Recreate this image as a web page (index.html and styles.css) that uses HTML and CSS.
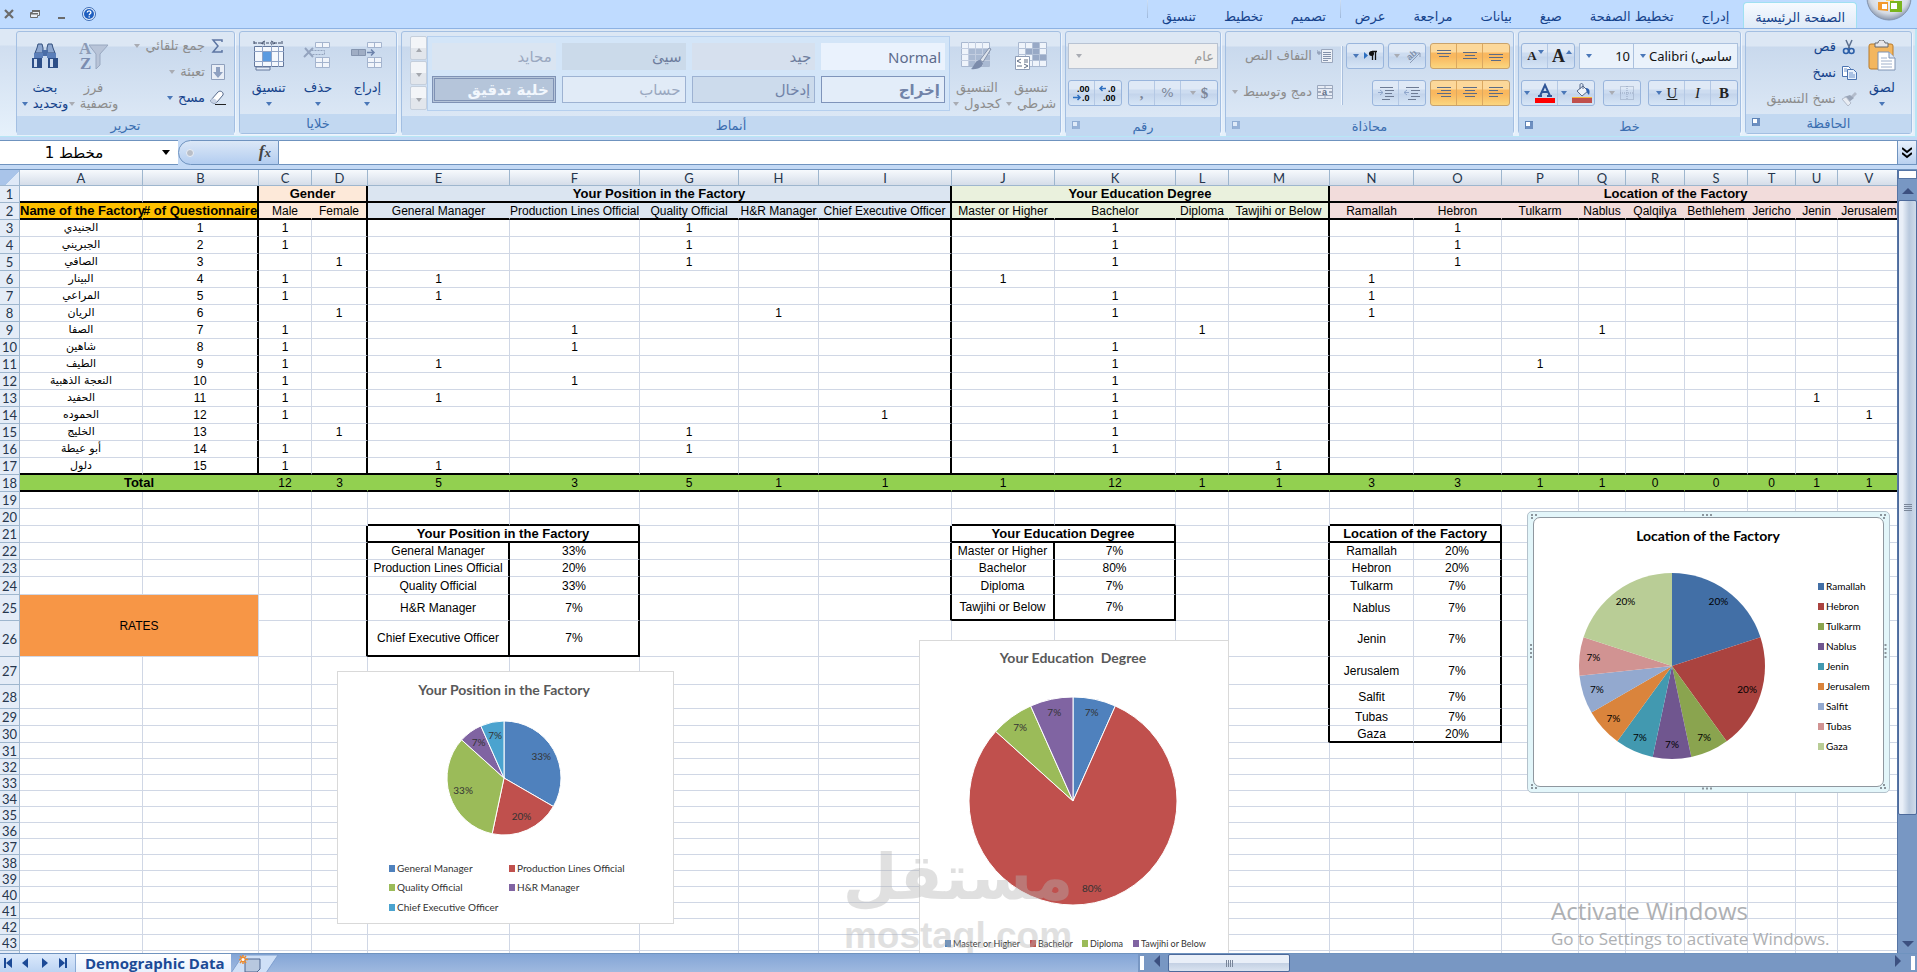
FILE: index.html
```html
<!DOCTYPE html>
<html lang="ar">
<head>
<meta charset="utf-8">
<title>Demographic Data</title>
<link rel="stylesheet" href="styles.css">
</head>
<body>
<header class="top" dir="rtl">
  <nav class="tabs">
    <button class="office" aria-label="Office">
      <svg width="46" height="46" viewBox="0 0 46 46">
        <defs><radialGradient id="orb" cx=".5" cy=".4" r=".6"><stop offset="0" stop-color="#fff"/><stop offset=".75" stop-color="#d5dbe4"/><stop offset="1" stop-color="#8b98ad"/></radialGradient></defs>
        <circle cx="23" cy="23" r="22" fill="url(#orb)" stroke="#8494ae"/>
        <rect x="13" y="16" width="9" height="9" rx="1" fill="#e8591c"/><rect x="24" y="14" width="10" height="10" rx="1" fill="#f5b52b"/>
        <path d="M12 27h10v9l-10-1z" fill="#f39a2b"/><path d="M24 26h12v11H24z" fill="#7ab51d"/>
        <path d="M16 29h5v5h-5zM25 28h6v6h-6z" fill="#fff"/>
        <path d="M20 22h8v4h-8z" fill="#fbd36a"/>
      </svg>
    </button>
    <a class="tab active" href="#home">الصفحة الرئيسية</a>
    <a class="tab" href="#insert">إدراج</a>
    <a class="tab" href="#layout">تخطيط الصفحة</a>
    <a class="tab" href="#formulas">صيغ</a>
    <a class="tab" href="#data">بيانات</a>
    <a class="tab" href="#review">مراجعة</a>
    <a class="tab" href="#view">عرض</a>
    <span class="tabsep"></span>
    <a class="tab" href="#design">تصميم</a>
    <a class="tab" href="#chart-layout">تخطيط</a>
    <a class="tab" href="#format">تنسيق</a>
    <span class="tabsep"></span>
    <span class="grow"></span>
    <div class="winctl">
      <button aria-label="Help"><svg width="14" height="14" viewBox="0 0 14 14"><circle cx="7" cy="7" r="6.5" fill="#e8f1fd" stroke="#3d6cb4"/><circle cx="7" cy="7" r="5" fill="#1f5fc0"/><path d="M5.2 5.6c0-2.4 3.7-2.3 3.7-.2C8.900 6.700 7.200 6.700 7.200 8.200M7.200 9.200v1.400" fill="none" stroke="#fff" stroke-width="1.300"/></svg></button>
      <button aria-label="Minimize"><svg width="10" height="10" viewBox="0 0 10 10"><path d="M2 8h7v2H2z" fill="#6b6b6b"/></svg></button>
      <button aria-label="Restore"><svg width="10" height="10" viewBox="0 0 10 10"><path d="M2.500 1.500h7v5h-2v2h-7v-5h2z" fill="#e9eef5" stroke="#6b6b6b"/><path d="M2 1h8v2H2zM0 4h8v1.500H0z" fill="#6b6b6b"/></svg></button>
      <button aria-label="Close"><svg width="10" height="10" viewBox="0 0 10 10"><path d="M1 1l8 8M9 1L1 9" stroke="#6b6b6b" stroke-width="2.200"/></svg></button>
    </div>
  </nav>

  <div class="ribbon">
    <section class="group g-clip">
      <div class="body">
        <button class="big paste"><svg width="28" height="32" viewBox="0 0 28 32"><rect x="1" y="4" width="24" height="25" rx="2" fill="#f3b65f" stroke="#b87a2a"/><path d="M7 3h3c0-4 7-4 7 0h3v4H7z" fill="#e6e6ea" stroke="#66686f"/><path d="M10 12h11l6 6v12H10z" fill="#fff" stroke="#7f93b4"/><path d="M21 12v6h6" fill="#dfe8f5" stroke="#7f93b4"/><path d="M13 18h6M13 21h11M13 24h11M13 27h11" stroke="#9fb0cb"/></svg><span>لصق</span><i class="dn"></i></button>
        <div class="stack">
          <button class="row"><svg width="16" height="16" viewBox="0 0 16 16"><path d="M5 1l4 9M11 1L7 10" stroke="#5b6f8f" stroke-width="1.500"/><circle cx="5" cy="12" r="2.500" fill="none" stroke="#2c5fa8" stroke-width="1.600"/><circle cx="10.500" cy="12" r="2.500" fill="none" stroke="#2c5fa8" stroke-width="1.600"/></svg>قص</button>
          <button class="row"><svg width="16" height="16" viewBox="0 0 16 16"><path d="M1.500 1.500h6l2 2v8h-8z" fill="#fff" stroke="#4b73b0"/><path d="M6.500 4.500h6l3 3v7h-9z" fill="#e8f0fb" stroke="#4b73b0"/><path d="M8 8h4M8 10h6M8 12h6M3 4h3M3 6h3" stroke="#6d93cc"/></svg>نسخ</button>
          <button class="row off"><svg width="16" height="16" viewBox="0 0 16 16"><path d="M10 5l4-4 2 2-4 4z" fill="#b3bccb"/><path d="M3 6l5 5 5-4-4-3z" fill="#9aa5b8"/><path d="M1 8l6 7 3-3-5-6z" fill="#e8ecf3" stroke="#b3bccb"/></svg>نسخ التنسيق</button>
        </div>
      </div>
      <h2>الحافظة<i class="launch"></i></h2>
    </section>

    <section class="group g-font">
      <div class="body rows">
        <div class="line">
          <div class="combos" dir="ltr">
            <label class="combo small"><i class="dn"></i><select aria-label="Font size"><option>10</option></select></label>
            <label class="combo wide"><i class="dn"></i><select aria-label="Font"><option>Calibri (ساسي</option></select></label>
          </div>
          <div class="btns"><button aria-label="Grow font"><b class="serif f18">A</b><i class="up sup"></i></button><button aria-label="Shrink font"><b class="serif f13">A</b><i class="dn sup"></i></button></div>
        </div>
        <div class="line">
          <div class="btns"><button><b class="serif f15">B</b></button><button><em class="serif f15">I</em></button><button class="wide"><u class="serif f15">U</u><i class="dn"></i></button></div>
          <div class="btns"><button class="wide" aria-label="Borders"><svg width="14" height="14" viewBox="0 0 14 14"><path d="M.5.500h13v13H.5zM7 0v14M0 7h14" fill="none" stroke="#93a3bd" stroke-dasharray="1 1"/></svg><i class="dn pale"></i></button></div>
          <div class="btns"><button class="wide" aria-label="Fill colour"><svg width="20" height="20" viewBox="0 0 20 20"><path d="M0 15h20v5H0z" fill="#c0504d"/><path d="M0 14h20v1H0z" fill="#f6b73c"/><path d="M5 8l6-5 5 5-6 5z" fill="#eef3fa" stroke="#56698a"/><path d="M8 6V2c0-2 3-2 3 0v4" fill="none" stroke="#56698a"/><path d="M14 5c4 0 4 4 3 7-2-2-3-4-3-7z" fill="#2d5fae"/></svg><i class="dn"></i></button><button class="wide" aria-label="Font colour"><svg width="20" height="20" viewBox="0 0 20 20"><path d="M0 15h20v5H0z" fill="#f00"/><path d="M5 13l5-11 5 11M7 9h6M3 13h4M12 13h5" fill="none" stroke="#2f5597" stroke-width="2"/></svg><i class="dn"></i></button></div>
        </div>
      </div>
      <h2>خط<i class="launch"></i></h2>
    </section>

    <section class="group g-align">
      <div class="body">
        <div class="rows">
          <div class="line">
            <div class="btns hot"><button aria-label="Bottom"><svg width="14" height="14" viewBox="0 0 14 14"><path d="M0 5.500h14M0 8.500h14M2 11.500h10" stroke="#5b6b85"/></svg></button><button aria-label="Middle"><svg width="14" height="14" viewBox="0 0 14 14"><path d="M0 3.500h14M2 6.500h10M0 9.500h14" stroke="#5b6b85"/></svg></button><button aria-label="Top"><svg width="14" height="14" viewBox="0 0 14 14"><path d="M0 1.500h14M0 4.500h14M2 7.500h10" stroke="#5b6b85"/></svg></button></div>
            <div class="btns"><button class="wide" aria-label="Orientation"><svg width="16" height="16" viewBox="0 0 16 16"><path d="M5 15L15 5M11 5h4v4" fill="none" stroke="#8c9bb5"/><text x="2" y="10" font-size="9" class="svgb" fill="#8090aa" transform="rotate(-40 7 8)">ab</text></svg><i class="dn pale"></i></button></div>
            <div class="btns"><button class="wide" aria-label="Direction"><svg width="14" height="12" viewBox="0 0 14 12"><path d="M0 2l4 3.500L0 9z" fill="#2d6fc0"/><path d="M8.500 1v9M11.500 1v9M13 1.500H8" stroke="#111" stroke-width="1.300"/><circle cx="7.500" cy="3.500" r="2.500" fill="#111"/></svg><i class="dn"></i></button></div>
          </div>
          <div class="line">
            <div class="btns hot"><button aria-label="Left"><svg width="14" height="14" viewBox="0 0 14 14"><path d="M0 1.500h14M0 4.500h9M0 7.500h14M0 10.500h9" stroke="#5b6b85"/></svg></button><button aria-label="Center"><svg width="14" height="14" viewBox="0 0 14 14"><path d="M0 1.500h14M2 4.500h10M0 7.500h14M2 10.500h10" stroke="#5b6b85"/></svg></button><button aria-label="Right"><svg width="14" height="14" viewBox="0 0 14 14"><path d="M0 1.500h14M4 4.500h10M0 7.500h14M4 10.500h10" stroke="#5b6b85"/></svg></button></div>
            <div class="btns start"><button aria-label="Indent"><svg width="16" height="14" viewBox="0 0 16 14"><path d="M2 1.500h13M7 4.500h9M7 7.500h7M7 10.500h9M4 13.500h8" stroke="#6d7b94"/><path d="M0 6.500h5M3 4l-3 2.500L3 9" fill="none" stroke="#8fa6cb"/></svg></button><button aria-label="Outdent"><svg width="16" height="14" viewBox="0 0 16 14"><path d="M2 1.500h13M7 4.500h9M7 7.500h7M7 10.500h9M4 13.500h8" stroke="#6d7b94"/><path d="M0 6.500h5M2 4l3 2.500L2 9" fill="none" stroke="#8fa6cb"/></svg></button></div>
          </div>
        </div>
        <span class="vsep"></span>
        <div class="stack two">
          <button class="row off"><svg width="16" height="14" viewBox="0 0 16 14"><path d="M4.500.500h11v13h-11z" fill="#eef2f8" stroke="#9aa7bd"/><path d="M6 3.500h8M6 5.500h8M6 7.500h8M6 9.500h8M6 11.500h5M0 1v3h4M2 2v4" stroke="#8492ab" fill="none"/></svg>التفاف النص</button>
          <button class="row off"><svg width="16" height="14" viewBox="0 0 16 14"><path d="M.5.500h15v13H.5zM0 3.500h16M0 10.500h16M8 0v3M8 11v3" fill="#e7ecf5" stroke="#9aa7bd"/><text x="5" y="10" font-size="9" class="svgb" fill="#5f6d86">a</text><path d="M1 7h3M12 7h3" stroke="#5f6d86"/></svg>دمج وتوسيط<i class="dn pale"></i></button>
        </div>
      </div>
      <h2>محاذاة<i class="launch pale"></i></h2>
    </section>

    <section class="group g-num">
      <div class="body rows">
        <div class="line"><label class="combo gray"><select aria-label="Number format"><option>عام</option></select><i class="dn pale"></i></label></div>
        <div class="line">
          <div class="btns off3"><button class="wide"><b class="serif f15">$</b><i class="dn pale"></i></button><button><span class="f13">%</span></button><button><b class="serif f15">,</b></button></div>
          <div class="btns tiny"><button aria-label="Increase decimal"><svg width="18" height="18" viewBox="0 0 18 18"><text x="9" y="8" font-size="9" class="svgb">.0</text><text x="4" y="17" font-size="9" class="svgb">.00</text><path d="M1 4.500h6M3.500 2L1 4.500 3.500 7" fill="none" stroke="#2d6fc0" stroke-width="1.500"/></svg></button><button aria-label="Decrease decimal"><svg width="18" height="18" viewBox="0 0 18 18"><text x="4" y="8" font-size="9" class="svgb">.00</text><text x="9" y="17" font-size="9" class="svgb">.0</text><path d="M0 13.500h7M4.500 11L7 13.500 4.500 16" fill="none" stroke="#2d6fc0" stroke-width="1.500"/></svg></button></div>
        </div>
      </div>
      <h2>رقم<i class="launch pale"></i></h2>
    </section>

    <section class="group g-style">
      <div class="body">
        <button class="big off"><svg width="32" height="30" viewBox="0 0 32 30"><path d="M3.500 1.500h28v24h-28z" fill="#eff4fb" stroke="#a9b8d0"/><path d="M18 2h7v6h-7zM11 8h14v6H11zM18 14h13v6H18z" fill="#98a9c6"/><path d="M3 7.500h29M3 13.500h29M3 19.500h29M10.500 1v24M17.500 1v24M24.500 1v24" stroke="#b4c2d8"/><path d="M.5 15.500h14v13H.5z" fill="#fff" stroke="#8d9cb6"/><path d="M6 18l-4 2 4 2M2 25h5M9 19h4M9 21h4M9 23l4 2-4 2" fill="none" stroke="#5e6c84"/></svg><span>تنسيق</span><span>شرطي<i class="dn pale"></i></span></button>
        <button class="big off"><svg width="32" height="30" viewBox="0 0 32 30"><path d="M.5 1.500h28v24H.5z" fill="#eff4fb" stroke="#a9b8d0"/><path d="M8 8h20v17H8z" fill="#a9b9d2"/><path d="M0 7.500h29M0 13.500h29M0 19.500h29M7.500 1v24M14.500 1v24M21.500 1v24" stroke="#c2cde0"/><path d="M30 8l-8 13-3-2L28 7z" fill="#dde3ec" stroke="#8492ab"/><path d="M10 28c3-2 4-9 9-9l3 3c0 4-6 7-12 6z" fill="#7c8cab"/></svg><span>التنسيق</span><span>كجدول<i class="dn pale"></i></span></button>
        <div class="gallery">
          <div class="cells">
            <button class="s-normal">Normal</button><button class="s-good">جيد</button><button class="s-bad">سيئ</button><button class="s-neutral">محايد</button>
            <button class="s-out">إخراج</button><button class="s-in">إدخال</button><button class="s-calc">حساب</button><button class="s-check">خلية تدقيق</button>
          </div>
          <div class="spin"><button aria-label="Up"><i class="up"></i></button><button aria-label="Down"><i class="dn"></i></button><button class="more" aria-label="More"><i class="dn"></i></button></div>
        </div>
      </div>
      <h2>أنماط</h2>
    </section>

    <section class="group g-cells">
      <div class="body">
        <button class="big"><svg width="32" height="30" viewBox="0 0 32 30"><path d="M16.500 1.500h14v5h-14zM16.500 16.500h14v10h-14zM16 21.500h15M23.500 1v6M23.500 16v11" fill="#f1f5fb" stroke="#a4b4ce"/><path d="M.5 8.500h14v6H.5zM7.500 8v7" fill="#9fadc4" stroke="#8494ae"/><path d="M16 11.500h7M20 8.500l3 3-3 3" fill="none" stroke="#6c82ab" stroke-width="1.500"/></svg><span>إدراج</span><i class="dn"></i></button>
        <button class="big"><svg width="32" height="30" viewBox="0 0 32 30"><path d="M13.500 1.500h14v5h-14zM13.500 16.500h14v10h-14zM13 21.500h15M20.500 1v6M20.500 16v11" fill="#f1f5fb" stroke="#a4b4ce"/><path d="M9.500 9.500h13v4h-13" fill="none" stroke="#93a3bd" stroke-dasharray="2 1"/><path d="M3 7l8 9M11 7l-9 9" stroke="#94a4bf" stroke-width="2"/></svg><span>حذف</span><i class="dn"></i></button>
        <button class="big"><svg width="32" height="30" viewBox="0 0 32 30"><path d="M1.500 5.500h29v20h-29z" fill="#f4f8fd" stroke="#64789c"/><path d="M1 10.500h30M1 20.500h30M9.500 5v21M18.500 5v21M25.500 5v21" stroke="#8fa3c6"/><path d="M10 11h8v9h-8z" fill="#5b9be0"/><path d="M3 26h14v3H3z" fill="#e3ebf7" stroke="#64789c"/><path d="M1 2h28M12 0l-4 2 4 2M18 0l4 2-4 2M1 0v4M29 0v4" fill="none" stroke="#3c4a66" stroke-dasharray="3 1"/></svg><span>تنسيق</span><i class="dn"></i></button>
      </div>
      <h2>خلايا</h2>
    </section>

    <section class="group g-edit">
      <div class="body">
        <div class="stack">
          <button class="row off"><svg width="16" height="16" viewBox="0 0 16 16"><path d="M12 4V2H3l5 6-5 6h9v-2" fill="none" stroke="#5d76a3" stroke-width="1.500"/></svg>جمع تلقائي<i class="dn pale"></i></button>
          <button class="row off"><svg width="16" height="16" viewBox="0 0 16 16"><path d="M1.500.500h13v15h-13z" fill="#e9eef6" stroke="#8fa0bd"/><path d="M6 3h4v5h3l-5 6-5-6h3z" fill="#8ea0c0"/></svg>تعبئة<i class="dn pale"></i></button>
          <button class="row"><svg width="16" height="16" viewBox="0 0 16 16"><path d="M1 10l7-8c2-2 6 0 5 3l-6 7c-2 2-7 1-6-2z" fill="#fff" stroke="#56698a"/><path d="M1 10c1-3 6-1 6 2-2 2-7 1-6-2z" fill="#c9d4e6"/><path d="M5 14.500h11" stroke="#222"/></svg>مسح<i class="dn"></i></button>
        </div>
        <button class="big off"><svg width="30" height="32" viewBox="0 0 30 32"><text x="0" y="14" font-size="17" class="svgs" fill="#8c9ab4">A</text><text x="1" y="29" font-size="17" class="svgs" fill="#7b8db0">Z</text><path d="M10 5h19l-8 9v11l-4 4V14z" fill="#b8c4d8" stroke="#99a8c0"/></svg><span>فرز</span><span>وتصفية<i class="dn pale"></i></span></button>
        <button class="big"><svg width="28" height="28" viewBox="0 0 28 28"><path d="M6 6l1-4h4l1 4v5H4zM16 6l1-4h4l1 4 2 5h-8z" fill="#8da7cf" stroke="#33507f"/><path d="M11 8h6v6h-6z" fill="#4a6da6"/><path d="M3 11h9v5H3zM16 11h9v5h-9z" fill="#5b7fb9"/><path d="M1 16h10v10H1zM17 16h10v10H17z" fill="#2d4f88"/><path d="M3 17h3v8H3zM19 17h3v8h-3z" fill="#cfdcf0"/></svg><span>بحث</span><span>وتحديد<i class="dn"></i></span></button>
      </div>
      <h2>تحرير</h2>
    </section>
  </div>
</header>

<div class="formula">
  <label class="namebox"><input aria-label="Name box" dir="rtl" value="مخطط 1"><i class="dn"></i></label>
  <button class="fx" aria-label="Insert function"><span class="knob"></span><em>f<small>x</small></em></button>
  <input class="finput" aria-label="Formula">
  <button class="expand" aria-label="Expand"><svg width="10" height="12" viewBox="0 0 10 12"><path d="M0 1l5 4 5-4M0 6l5 4 5-4" fill="none" stroke="#000" stroke-width="2"/></svg></button>
</div>

<main class="work">
  <div class="sheet">
    <table class="grid" id="grid"></table>
    <svg class="chart c1" id="chart1" width="337" height="253"></svg>
    <svg class="chart c2" id="chart2" width="310" height="330"></svg>
    <div class="chart c3">
      <svg class="handles" width="361" height="280"><path d="M174 3h12M174 276.500h12" stroke="#8b959c" stroke-width="2" stroke-dasharray="2 2"/><path d="M3 132v16M357.500 132v16" stroke="#8b959c" stroke-width="2" stroke-dasharray="2 2"/><path d="M3 3h6M3 6h2M352 3h6M355 6h3M3 276h6M3 273h2M352 276h6M355 273h3" stroke="#8b959c" stroke-width="2" stroke-dasharray="2 2"/></svg>
      <svg id="chart3" width="351" height="270"></svg>
    </div>
    <div class="mark"><span>مستقل</span><b>mostaql.com</b></div>
    <div class="activate"><p>Activate Windows</p><p>Go to Settings to activate Windows.</p></div>
  </div>
  <div class="vscroll"><span class="split"></span><button aria-label="Scroll up"><i class="up"></i></button><div class="track"><span class="thumb"><i></i><i></i><i></i><i></i></span></div><button aria-label="Scroll down"><i class="dn"></i></button></div>
</main>

<footer class="bottom">
  <div class="navs">
    <button aria-label="First"><svg width="8" height="10" viewBox="0 0 8 10"><path d="M0 0h2v10H0zM8 0v10L2 5z" fill="#1c4a96"/></svg></button>
    <button aria-label="Previous"><svg width="8" height="10" viewBox="0 0 8 10"><path d="M6 0v10L0 5z" fill="#1c4a96"/></svg></button>
    <button aria-label="Next"><svg width="8" height="10" viewBox="0 0 8 10"><path d="M1 0v10l6-5z" fill="#1c4a96"/></svg></button>
    <button aria-label="Last"><svg width="8" height="10" viewBox="0 0 8 10"><path d="M6 0h2v10H6zM0 0v10l6-5z" fill="#1c4a96"/></svg></button>
  </div>
  <button class="stab">Demographic Data</button>
  <button class="newtab" aria-label="Insert sheet"><svg width="48" height="19" viewBox="0 0 48 19"><path d="M0 19L12 1h35L35 19z" fill="#cfe0f7" stroke="#7f9fce"/><path d="M14 5h15v10l-3 3H14z" fill="#b8c8df" stroke="#4d658f"/><path d="M12 1v9M8 5.500h9M9 2l6 7M15 2L9 9" stroke="#ef8a2b" stroke-width="1.500"/><circle cx="12" cy="5.500" r="1.500" fill="#fff"/></svg></button>
  <span class="grow"></span>
  <div class="hscroll"><span class="split"></span><button aria-label="Scroll left"><i class="lf"></i></button><span class="thumb"><i></i><i></i><i></i><i></i></span><span class="grow"></span><button aria-label="Scroll right"><i class="rt"></i></button><span class="split"></span></div>
</footer>
<script src="app.js"></script>
</body>
</html>
```
FILE: styles.css
```css
* { box-sizing: border-box; }
body { margin: 0; height: 100vh; display: flex; flex-direction: column; overflow: hidden; background: #a9c4e9; font: 13px/16px "DejaVu Sans", sans-serif; }
button, select, input { font: inherit; color: inherit; margin: 0; padding: 0; border: 0; background: none; border-radius: 0; }
svg { display: block; flex: none; direction: ltr; }
.grow { flex: 1; }
.serif { font-family: "Liberation Serif", serif; }
.f13 { font-size: 13px; } .f15 { font-size: 15px; } .f18 { font-size: 18px; }
.svgb { font-family: "Liberation Sans", sans-serif; font-weight: bold; }
.svgs { font-family: "Liberation Serif", serif; font-weight: bold; }

/* arrows */
.dn, .up, .lf, .rt { display: inline-block; flex: none; width: 0; height: 0; border: 3px solid transparent; }
.dn { border-top: 4px solid #4a77b8; border-bottom: 0; }
.up { border-bottom: 4px solid #4a77b8; border-top: 0; }
.dn.pale { border-top-color: #a9acb3; }
.lf { border-width: 6px; border-left: 0; border-right-color: #3c5080; }
.rt { border-width: 6px; border-right: 0; border-left-color: #3c5080; }

/* tabs */
.tabs { display: flex; height: 29px; background: #bfdbff; border-bottom: 1px solid #8db2e3; overflow: hidden; padding: 0 5px 0 4px; }
.office { align-self: flex-end; margin: 0 0 7px 9px; }
.tab { padding: 9px 14px 0; color: #15428b; text-decoration: none; white-space: nowrap; line-height: 16px; }
.tab.active { margin-top: 2px; padding: 7px 11px 0; background: linear-gradient(#f6faff, #dfeaf7); border: 1px solid #9fe0f2; border-bottom: 0; border-radius: 4px 4px 0 0; }
.tabsep { width: 1px; height: 18px; background: linear-gradient(#cfe0f5, #9db8dc); }
.winctl { display: flex; align-items: center; gap: 16px; height: 28px; }
.winctl button { display: block; }

/* ribbon */
.ribbon { display: flex; gap: 4px; height: 108px; padding: 2px 3px 2px 16px; background: linear-gradient(#dde8f5 0 16px, #d0def0 17px, #e6f1fb 100%); border-bottom: 1px solid #b7e6f5; border-inline-start: 2px solid #b7e6f5; }
.group { display: flex; flex-direction: column; border: 1px solid #a3bfe2; border-radius: 3px; background: linear-gradient(#dce7f4 0 14px, #c9d9ed 15px, #dbe7f5 84px); box-shadow: 1px 1px 0 #eef5fd; color: #15428b; }
.group .body { flex: 1; display: flex; padding: 4px; }
.group h2 { position: relative; margin: 0; height: 19px; background: #c2d8f1; color: #3b6eb0; font-weight: normal; font-size: 13px; line-height: 19px; text-align: center; }
.launch { position: absolute; left: 6px; top: 4px; width: 8px; height: 8px; border: 1px solid #5d82b5; border-width: 1px 0 0 1px; box-shadow: inset -3px -3px 0 #6d8fc0; background: #fff; }
.launch.pale { opacity: .5; }
.g-clip { width: 167px; } .g-font { width: 223px; } .g-align { width: 289px; } .g-num { width: 156px; }
.g-style { flex: 1; } .g-cells { width: 158px; } .g-edit { width: 219px; }
.off { color: #8d8d8d; }
.big { display: flex; flex-direction: column; align-items: center; width: 50px; padding-top: 4px; white-space: nowrap; }
.big svg { height: 32px; margin-bottom: 8px; }
.big span { line-height: 16px; display: flex; align-items: center; gap: 5px; }
.big > .dn { margin-top: 6px; }
.stack { display: flex; flex-direction: column; gap: 10px; padding-top: 3px; flex: 1; }
.row { display: flex; align-items: center; gap: 5px; height: 16px; white-space: nowrap; }
.two { gap: 20px; padding-top: 16px; }
.rows { display: flex; flex-direction: column; }
.group .rows { gap: 11px; padding: 11px 3px; }
.g-align .body { padding: 0; }
.g-font .rows, .g-num .rows { padding: 11px 2px; }
.line { display: flex; gap: 4px; justify-content: space-between; height: 26px; }
.btns { display: flex; border: 1px solid #99b5dc; border-radius: 3px; overflow: hidden; background: linear-gradient(#dfe9f6 0 8px, #cddcf0 9px 12px, #c3d4eb 13px, #d6e5f6); }
.btns button { display: flex; align-items: center; justify-content: center; gap: 4px; flex: 1; min-width: 26px; color: #222; }
.btns button.wide { min-width: 38px; gap: 5px; }
.btns button + button { border-inline-start: 1px solid #b4c8e4; }
.g-font .line .btns .wide, .g-align .line .btns .wide { min-width: 36px; }
.g-align .start { margin-inline-end: auto; }
.btns.hot { background: linear-gradient(#fcd89a 0 8px, #f9b85f 9px 13px, #fbd67f); border-color: #c9a36c; }
.hot button + button { border-color: #dba860; }
.off3 button { color: #7c8698; }
.off3 button.wide { min-width: 36px; }
.sup { align-self: flex-start; margin-top: 6px; margin-inline-start: -2px; }
.btns:has(.sup) button { flex-direction: row-reverse; gap: 1px; }
.combos { display: flex; }
.combo { display: flex; align-items: center; border: 1px solid #abc1de; background: #eaf2fb; color: #111; height: 26px; font: 13px/16px "Noto Sans", "DejaVu Sans", sans-serif; }
.combo select { appearance: none; flex: 1; min-width: 0; padding: 0 3px; }
.combo.wide { width: 105px; padding-left: 6px; } .combo.small { width: 54px; padding-left: 6px; border-right: 0; }
.combo.small select { text-align: right; text-align-last: right; }
.combo.gray { flex: 1; background: #efefef; border-color: #b8c3d3; color: #999; padding-left: 7px; }
.vsep { width: 2px; margin: 14px 0 12px; margin-inline-end: 8px; background: #f1f7fe; border-right: 1px solid #a9bfdd; }

/* style gallery */
.gallery { display: flex; flex: 1; }
.g-style .big { width: 54px; }
.g-style .body { padding-inline-start: 2px; padding-inline-end: 8px; }
.gallery .cells { flex: 1; display: grid; grid-template-columns: repeat(4, 1fr); grid-template-rows: 27px 27px; gap: 6px; padding: 6px 4px; height: 75px; border: 1px solid #b5cfee; background: #d3e5f8; }
.cells button { text-align: right; padding: 0 4px; font: 15px/20px "DejaVu Sans", sans-serif; color: #8794b0; }
.cells .s-normal { direction: ltr; background: #eaf2fd; color: #5d6b8c; font-family: "Noto Sans", sans-serif; }
.s-good { background: #d6e0ee; } .s-bad { background: #cbdaea; } .s-neutral { background: #dae5f2; }
.cells .s-good, .cells .s-bad { color: #6e7d9d; }
.cells .s-neutral, .cells .s-calc { color: #9aa8c0; }
.cells .s-out { border: 1px solid #7f94ba; background: #e3edf9; font-weight: bold; color: #7183a8; }
.cells .s-in { border: 1px solid #9db2d2; background: #ccdbec; color: #7183a8; }
.cells .s-calc { border: 1px solid #9db2d2; background: #e1ebf7; }
.cells .s-check { border: 3px double #7f92b5; background: #b5c5da; color: #f2f7fd; font-weight: bold; }
.spin { display: flex; flex-direction: column; width: 17px; gap: 1px; }
.spin button { height: 24px; border: 1px solid #c5cfdc; background: linear-gradient(#f3f5f8 50%, #e2e6ec 50%); border-radius: 2px; }
.spin .dn { border-top-color: #a5a8ae; } .spin .up { border-bottom-color: #a5a8ae; }
.more .dn { box-shadow: 0 -6px 0 -2px #a5a8ae; }
.g-cells .body, .g-edit .body { justify-content: space-between; }
.g-edit .stack { flex: none; width: 112px; padding-top: 2px; padding-inline-start: 4px; }
.g-edit .big { width: 48px; }

/* formula bar */
.formula { display: flex; height: 33px; padding: 3px 0 4px; background: #c3d9f5; border-bottom: 1px solid #6f93bf; flex: none; }
.namebox { display: flex; align-items: center; width: 178px; background: #fff; border: 1px solid #6f93bf; border-width: 1px 0; padding-right: 8px; }
.namebox input { flex: 1; min-width: 0; text-align: center; padding-right: 14px; font-size: 15px; outline: 0; }
.namebox .dn { border-width: 5px 4px 0; border-top-color: #000; }
.fx { display: flex; align-items: center; justify-content: space-between; width: 101px; padding: 0 7px; border: 1px solid #6f93bf; border-radius: 13px 0 0 13px; background: linear-gradient(#dce8f7, #b3cdf0); }
.knob { width: 8px; height: 8px; border-radius: 4px; background: #b9bec7; border: 1px solid #e8eef7; }
.fx em { font: italic bold 17px/18px "Liberation Serif", serif; color: #444; }
.fx small { font-size: 13px; }
.finput { flex: 1; background: #fff; border: 1px solid #6f93bf; border-width: 1px 0; }
.expand { width: 20px; display: flex; align-items: center; justify-content: center; border: 1px solid #6f93bf; background: linear-gradient(#eaf2fc, #b8d0f0); }

/* worksheet */
.work { flex: 1; display: flex; min-height: 0; }
.sheet { position: relative; flex: 1; min-width: 0; overflow: hidden; background: #fff; }
.grid { table-layout: fixed; width: 2022px; border-collapse: separate; border-spacing: 0; font: 12px/14px "Liberation Sans", "DejaVu Sans", sans-serif; color: #000; }
.grid td, .grid th { padding: 0; height: inherit; text-align: center; vertical-align: middle; white-space: nowrap; border: solid #d0d7e5; border-width: 0 1px 1px 0; font-weight: normal; }
.grid tr { height: 16px; }
.grid th { background: #e4ecf7; border-color: #9eb6ce; color: #26364d; font: 13px/14px Lato, sans-serif; }
.grid thead th { background: linear-gradient(#f7fafd, #d5dde9); }
.grid thead th:first-child { background: linear-gradient(135deg, #a9c4e9 60%, #dfe9f7 60%); }
.grid .b { font-weight: bold; font-size: 13px; }
.grid .ar { font-family: "DejaVu Sans", sans-serif; font-size: 11px; }
.grid .kr { border-right: 2px solid #000; }
.grid .kb { border-bottom: 2px solid #000; }
.grid .gold { background: #ffc000; } .grid .peach { background: #fde9d9; } .grid .blue { background: #dbe5f1; }
.grid .green { background: #eaf1dd; } .grid .rose { background: #f2dcdb; } .grid .lime { background: #92d050; border-right-color: #92d050; }
.grid .orange { background: #f79646; }
.grid .flat:not(.kr) { border-right-color: transparent; }

/* floating charts */
.chart { position: absolute; background: #fff; border: 1px solid #d9d9d9; font-family: Lato, sans-serif; }
.c1 { left: 337px; top: 501px; }
.c2 { left: 919px; top: 470px; }
.c3 { left: 1527px; top: 341px; padding: 5px; border: 1px solid #b4c2cc; border-radius: 5px; background: #e3f6fa; }
.c3 #chart3 { background: #fff; border: 1px solid #8f979f; border-radius: 7px; }
.handles { position: absolute; left: 0; top: 0; }
.mark { position: absolute; left: 843px; top: 670px; width: 230px; display: flex; flex-direction: column; align-items: center; color: #b4b4b4; opacity: .4; font-weight: bold; pointer-events: none; }
.mark span { font: bold 63px/76px "DejaVu Sans", sans-serif; }
.mark b { font: bold 37px/40px "Liberation Sans", sans-serif; }
.activate { position: absolute; left: 1551px; top: 725px; color: #a6a8ab; opacity: .9; font-family: "Open Sans", sans-serif; pointer-events: none; }
.activate p { margin: 0; font-size: 17px; line-height: 24px; }
.activate p:first-child { font-size: 24px; line-height: 32px; }

/* scrollbars and sheet tabs */
.vscroll { display: flex; flex-direction: column; width: 20px; background: #7897c3; border-left: 1px solid #5675a5; }
.vscroll .split { height: 9px; border: 1px solid #5675a5; background: #fff; }
.vscroll button { height: 21px; }
.vscroll .up { border-width: 0 6px 6px; border-bottom-color: #3c5080; }
.vscroll .dn { border-width: 6px 6px 0; border-top-color: #3c5080; }
.track { flex: 1; }
.track .thumb { display: flex; flex-direction: column; align-items: center; justify-content: center; gap: 1px; height: 84%; border: 1px solid #4d6a9b; border-radius: 2px; background: linear-gradient(90deg, #e9eff8 20%, #b9c9de 60%, #cfdbea); }
.track .thumb i { width: 8px; height: 1px; background: #7a8699; }
.bottom { display: flex; height: 19px; flex: none; border-top: 1px solid #6f93bf; background: linear-gradient(#83a5d6, #9fb9df); }
.navs { display: flex; align-items: center; width: 76px; justify-content: space-between; padding: 0 8px 0 4px; background: linear-gradient(#dbe9fb, #bcd4f3); border-right: 1px solid #8aa9d4; }
.stab { padding: 0 6px 0 9px; background: linear-gradient(#fff, #e8f1fd); color: #1c4a96; font: bold 15px/18px "Open Sans", sans-serif; }
.hscroll { display: flex; align-items: center; width: 779px; background: #7897c3; }
.hscroll .split { width: 8px; height: 18px; background: #fff; border: 2px solid #7897c3; }
.hscroll button { width: 22px; height: 18px; }
.hscroll .thumb { display: flex; align-items: center; justify-content: center; gap: 1px; width: 122px; height: 18px; border: 1px solid #4d6a9b; border-radius: 2px; background: linear-gradient(#e9eff8 50%, #c3d0e3 50%, #d9e3f0); }
.hscroll .thumb i { width: 1px; height: 7px; background: #7a8699; }
```
FILE: app.js
```js
const COLS = [123, 116, 53, 56, 142, 130, 99, 80, 133, 103, 121, 53, 101, 84, 88, 77, 47, 59, 63, 48, 42, 63, 121];
const HEIGHTS = { 24: 18, 25: 26, 26: 36, 27: 28, 28: 24 };
const cells = {};
const letter = i => String.fromCharCode(65 + i);
const at = (c, r) => (cells[letter(c) + r] ??= { text: '', cls: [] });
const idx = l => l.charCodeAt(0) - 65;
function put(ref, text, cls = '', span = 1, rows = 1) {
  const c = at(idx(ref[0]), +ref.slice(1));
  c.text = text; c.span = span; c.rows = rows;
  if (cls) c.cls.push(...cls.split(' '));
  for (let y = 0; y < rows; y++) for (let x = 0; x < span; x++) if (x || y) at(idx(ref[0]) + x, +ref.slice(1) + y).hidden = true;
}

put('C1', 'Gender', 'b peach', 2); put('E1', 'Your Position in the Factory', 'b blue', 5);
put('J1', 'Your Education Degree', 'b green', 4); put('N1', 'Location of the Factory', 'b rose', 10);
const heads = ['Name of the Factory', '# of Questionnaire', 'Male', 'Female', 'General Manager', 'Production Lines Official', 'Quality Official', 'H&R Manager', 'Chief Executive Officer', 'Master or Higher', 'Bachelor', 'Diploma', 'Tawjihi or Below', 'Ramallah', 'Hebron', 'Tulkarm', 'Nablus', 'Qalqilya', 'Bethlehem', 'Jericho', 'Jenin', 'Jerusalem', ''];
const tint = i => i < 2 ? 'gold b flat' : i < 4 ? 'peach flat' : i < 9 ? 'blue flat' : i < 13 ? 'green flat' : 'rose flat';
heads.forEach((h, i) => put(letter(i) + 2, h, tint(i)));
const people = [['الجنيدي', 'CGKO'], ['الجبريني', 'CGKO'], ['الصافي', 'DGKO'], ['البينار', 'CEJN'], ['المراعي', 'CEKN'], ['الريان', 'DHKN'], ['الصفا', 'CFLQ'], ['شاهين', 'CFK'], ['الطيف', 'CEKP'], ['النعجة الذهبية', 'CFK'], ['الحفيد', 'CEKU'], ['الحموده', 'CIKV'], ['الخليج', 'DGK'], ['أبو عيطة', 'CGK'], ['دلول', 'CEM']];
people.forEach(([name, ones], i) => {
  put('A' + (i + 3), name, 'ar'); put('B' + (i + 3), i + 1);
  for (const c of ones) put(c + (i + 3), 1);
});
put('A18', 'Total', 'lime b', 2);
[12, 3, 5, 3, 5, 1, 1, 1, 12, 1, 1, 3, 3, 1, 1, 0, 0, 0, 1, 1, ''].forEach((v, i) => put(letter(i + 2) + 18, v, 'lime'));
put('A25', 'RATES', 'orange', 2, 2);
put('E21', 'Your Position in the Factory', 'b', 2);
put('J21', 'Your Education Degree', 'b', 2);
put('N21', 'Location of the Factory', 'b', 2);
function rates(a, b, list) { list.forEach(([n, v], i) => { put(a + (22 + i), n); put(b + (22 + i), v + '%'); }); }
rates('E', 'F', [['General Manager', 33], ['Production Lines Official', 20], ['Quality Official', 33], ['H&R Manager', 7], ['Chief Executive Officer', 7]]);
rates('J', 'K', [['Master or Higher', 7], ['Bachelor', 80], ['Diploma', 7], ['Tawjihi or Below', 7]]);
rates('N', 'O', [['Ramallah', 20], ['Hebron', 20], ['Tulkarm', 7], ['Nablus', 7], ['Jenin', 7], ['Jerusalem', 7], ['Salfit', 7], ['Tubas', 7], ['Gaza', 20]]);

const vline = (c, r1, r2) => { for (let r = r1; r <= r2; r++) at(idx(c), r).cls.push('kr'); };
const hline = (r, c1, c2) => { for (let c = idx(c1); c <= idx(c2); c++) at(c, r).cls.push('kb'); };
vline('B', 1, 17); vline('D', 2, 17); vline('I', 2, 17); vline('M', 2, 17);
vline('C', 1, 1); vline('E', 1, 1); vline('J', 1, 1);
[1, 2, 17, 18].forEach(r => hline(r, 'A', 'W'));
function box(before, a, b, last, split) {
  vline(before, 21, last); vline(a, 21, 21); vline(b, 22, last);
  if (split) vline(a, 22, last);
  [20, 21, last].forEach(r => hline(r, a, b));
}
box('D', 'E', 'F', 26, true); box('I', 'J', 'K', 25, true); box('M', 'N', 'O', 30, false);

let html = '<colgroup><col style="width:20px">' + COLS.map(w => `<col style="width:${w}px">`).join('') + '</colgroup><thead><tr><th></th>' + COLS.map((_, i) => `<th>${letter(i)}</th>`).join('') + '</tr></thead><tbody>';
for (let r = 1; r <= 44; r++) {
  html += `<tr style="height:${HEIGHTS[r] || (r <= 30 ? 17 : 16)}px"><th>${r}</th>`;
  COLS.forEach((_, c) => {
    const d = cells[letter(c) + r];
    if (!d) { html += '<td></td>'; return; }
    if (d.hidden) return;
    const span = (d.span > 1 ? ` colspan="${d.span}"` : '') + (d.rows > 1 ? ` rowspan="${d.rows}"` : '');
    html += `<td${span}${d.cls.length ? ` class="${d.cls.join(' ')}"` : ''}>${String(d.text).replace('&', '&amp;')}</td>`;
  });
  html += '</tr>';
}
document.getElementById('grid').innerHTML = html + '</tbody>';

function pie(id, o) {
  const total = o.values.reduce((a, b) => a + b, 0);
  const pt = (t, r) => [o.cx + r * Math.sin(t * 2 * Math.PI), o.cy - r * Math.cos(t * 2 * Math.PI)];
  let t = 0, s = `<text x="${o.tx}" y="${o.ty}" text-anchor="middle" font-size="14" font-weight="bold" fill="${o.title}">${o.name}</text>`, labels = '';
  o.values.forEach((v, i) => {
    const a = pt(t / total, o.r), b = pt((t + v) / total, o.r), m = pt((t + v / 2) / total, o.r - 14);
    s += `<path d="M${o.cx} ${o.cy}L${a}A${o.r} ${o.r} 0 ${v / total > .5 ? 1 : 0} 1 ${b}Z" fill="${o.colors[i]}" stroke="${o.edge}" stroke-width="${o.edgeW}"/>`;
    labels += `<text x="${m[0]}" y="${m[1] + 3}" text-anchor="middle" font-size="10" fill="${o.ink}">${Math.round(v / total * 100)}%</text>`;
    t += v;
  });
  s += labels;
  o.legend.forEach(([n, x, y], i) => {
    s += `<rect x="${x}" y="${y - 7}" width="6" height="7" fill="${o.colors[i]}"/><text x="${x + 8}" y="${y}" font-size="${o.size}" fill="${o.ink}">${n.replace('&', '&amp;')}</text>`;
  });
  document.getElementById(id).innerHTML = s;
}
pie('chart1', { name: 'Your Position in the Factory', tx: 166, ty: 23, title: '#595959', cx: 166, cy: 106, r: 57, values: [5, 3, 5, 1, 1], edge: '#fff', edgeW: 1, ink: '#333', size: 10,
  colors: ['#4f81bd', '#c0504d', '#9bbb59', '#8064a2', '#4ba3cf'],
  legend: [['General Manager', 51, 200], ['Production Lines Official', 171, 200], ['Quality Official', 51, 219], ['H&R Manager', 171, 219], ['Chief Executive Officer', 51, 239]] });
pie('chart2', { name: 'Your Education&#160; Degree', tx: 153, ty: 22, title: '#595959', cx: 153, cy: 160, r: 104, values: [1, 12, 1, 1], edge: '#fff', edgeW: 1, ink: '#333', size: 9,
  colors: ['#4f81bd', '#c0504d', '#9bbb59', '#8064a2'],
  legend: [['Master or Higher', 25, 306], ['Bachelor', 110, 306], ['Diploma', 162, 306], ['Tawjihi or Below', 213, 306]] });
pie('chart3', { name: 'Location of the Factory', tx: 174, ty: 23, title: '#000', cx: 138, cy: 148, r: 93, values: [3, 3, 1, 1, 1, 1, 1, 1, 3], edge: '#c9cdd6', edgeW: 0, ink: '#000', size: 10,
  colors: ['#426fa6', '#aa433f', '#8aa44f', '#70568f', '#4299b0', '#da843c', '#93a9cf', '#d19392', '#b9cd96'],
  legend: ['Ramallah', 'Hebron', 'Tulkarm', 'Nablus', 'Jenin', 'Jerusalem', 'Salfit', 'Tubas', 'Gaza'].map((n, i) => [n, 284, 72 + i * 20]) });
```
